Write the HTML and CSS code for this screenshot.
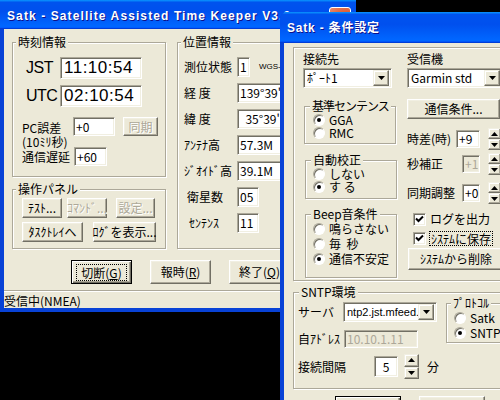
FILE: index.html
```html
<!DOCTYPE html>
<html lang="ja">
<head>
<meta charset="utf-8">
<title>Satk</title>
<link rel="stylesheet" href="styles.css">
</head>
<body>
<div class="win main">
  <div class="titlebar mtb">
    <span class="title">Satk - Satellite Assisted Time Keeper V3.0</span>
    <span class="tclose"><svg width="20" height="20" viewBox="0 0 20 20"><path d="M6 6l8 8M14 6l-8 8" stroke="#fff" stroke-width="2"/></svg></span>
  </div>
  <div class="client mclient">
    <div class="cols">
      <div class="lcol">
        <fieldset class="grp g-time">
          <legend>時刻情報</legend>
          <div class="time-in">
            <div class="trow"><span class="tlbl">JST</span><span class="edit big">11:10:54</span></div>
            <div class="trow r2"><span class="tlbl">UTC</span><span class="edit big">02:10:54</span></div>
            <div class="prow"><span class="plbl">PC誤差</span><span class="edit e-pc">+0</span><span class="btn dis b-sync">同期</span></div>
            <div class="unit">(10ﾐﾘ秒)</div>
            <div class="prow2"><span class="plbl2">通信遅延</span><span class="edit e-delay">+60</span></div>
          </div>
        </fieldset>
        <fieldset class="grp g-panel">
          <legend>操作パネル</legend>
          <div class="panel-in">
            <div class="brow"><span class="btn b-test">ﾃｽﾄ...</span><span class="btn dis b-cmd">ｺﾏﾝﾄﾞ...</span><span class="btn dis b-set">設定...</span></div>
            <div class="brow r2"><span class="btn b-tray">ﾀｽｸﾄﾚｲへ</span><span class="btn b-log">ﾛｸﾞを表示...</span></div>
          </div>
        </fieldset>
      </div>
      <fieldset class="grp g-pos">
        <legend>位置情報</legend>
        <div class="pos-in">
          <div class="prw"><span class="pl">測位状態</span><span class="edit e-fix">1</span><span class="wgs">WGS-84</span></div>
          <div class="prw"><span class="pl">経 度</span><span class="edit e-long">139°39'</span></div>
          <div class="prw"><span class="pl">緯 度</span><span class="edit e-long">&nbsp; 35°39'</span></div>
          <div class="prw"><span class="pl">ｱﾝﾃﾅ高</span><span class="edit e-long">57.3M</span></div>
          <div class="prw"><span class="pl">ｼﾞｵｲﾄﾞ高</span><span class="edit e-long">39.1M</span></div>
          <div class="prw"><span class="pl pl-sat">衛星数</span><span class="edit e-short">05</span></div>
          <div class="prw"><span class="pl pl-sen">ｾﾝﾃﾝｽ</span><span class="edit e-short">11</span></div>
        </div>
      </fieldset>
    </div>
    <div class="mbtns">
      <span class="btn def mb"><span class="focus">切断(<u>G</u>)</span></span>
      <span class="btn mb">報時(<u>R</u>)</span>
      <span class="btn mb">終了(<u>Q</u>)</span>
    </div>
    <div class="status">受信中(NMEA)</div>
  </div>
</div>

<div class="win dlg">
  <div class="titlebar dtb"><span class="title">Satk - 条件設定</span></div>
  <div class="client dclient">
    <div class="etched outer">
      <div class="dl">
        <div class="lbl">接続先</div>
        <div class="combo c-port"><span class="ctext">ﾎﾟｰﾄ1</span><span class="dd"><svg width="7" height="4" viewBox="0 0 7 4"><path d="M0 0h7L3.5 4z"/></svg></span></div>
        <fieldset class="grp dg g-sent">
          <legend>基準センテンス</legend>
          <div class="ropt"><span class="radio on"></span>GGA</div>
          <div class="ropt"><span class="radio"></span>RMC</div>
        </fieldset>
        <fieldset class="grp dg g-auto">
          <legend>自動校正</legend>
          <div class="ropt"><span class="radio"></span>しない</div>
          <div class="ropt"><span class="radio on"></span>す る</div>
        </fieldset>
        <fieldset class="grp dg g-beep">
          <legend>Beep音条件</legend>
          <div class="ropt r15"><span class="radio"></span>鳴らさない</div>
          <div class="ropt r15"><span class="radio"></span>毎&nbsp; 秒</div>
          <div class="ropt r15"><span class="radio on"></span>通信不安定</div>
        </fieldset>
      </div>
      <div class="dr">
        <div class="lbl">受信機</div>
        <div class="combo c-recv"><span class="ctext">Garmin std</span><span class="dd"><svg width="7" height="4" viewBox="0 0 7 4"><path d="M0 0h7L3.5 4z"/></svg></span></div>
        <span class="btn b-comm">通信条件...</span>
        <div class="srow s1"><span class="sl sl1">時差(時)</span><span class="edit e-tz">+9</span>
          <span class="spin"><span class="sb"><svg width="7" height="4" viewBox="0 0 7 4"><path d="M0 4h7L3.5 0z"/></svg></span><span class="sb"><svg width="7" height="4" viewBox="0 0 7 4"><path d="M0 0h7L3.5 4z"/></svg></span></span></div>
        <div class="srow s2"><span class="sl">秒補正</span><span class="edit dis e-sm">+1</span>
          <span class="spin"><span class="sb"><svg width="7" height="4" viewBox="0 0 7 4"><path d="M0 4h7L3.5 0z"/></svg></span><span class="sb"><svg width="7" height="4" viewBox="0 0 7 4"><path d="M0 0h7L3.5 4z"/></svg></span></span></div>
        <div class="srow s3"><span class="sl">同期調整</span><span class="edit e-sm">+0</span>
          <span class="spin"><span class="sb"><svg width="7" height="4" viewBox="0 0 7 4"><path d="M0 4h7L3.5 0z"/></svg></span><span class="sb"><svg width="7" height="4" viewBox="0 0 7 4"><path d="M0 0h7L3.5 4z"/></svg></span></span></div>
        <div class="crow c1"><span class="chk"><svg width="9" height="9" viewBox="0 0 9 9"><path d="M1 3.5l2.5 2.5L8 1.5" fill="none" stroke="#000" stroke-width="2"/></svg></span><span class="ctxt">ログを出力</span></div>
        <div class="crow c2"><span class="chk"><svg width="9" height="9" viewBox="0 0 9 9"><path d="M1 3.5l2.5 2.5L8 1.5" fill="none" stroke="#000" stroke-width="2"/></svg></span><span class="ctxt focus2">ｼｽﾃﾑに保存</span></div>
        <span class="btn b-del">ｼｽﾃﾑから削除</span>
      </div>
    </div>
    <fieldset class="grp dg g-sntp">
      <legend>SNTP環境</legend>
      <div class="sntp-top">
        <div class="sntp-left">
          <div class="nrow n1"><span class="nl">サーバ</span><span class="combo c-srv"><span class="ctext">ntp2.jst.mfeed.ad.jp</span><span class="dd"><svg width="7" height="4" viewBox="0 0 7 4"><path d="M0 0h7L3.5 4z"/></svg></span></span></div>
          <div class="nrow n2"><span class="nl nl2">自ｱﾄﾞﾚｽ</span><span class="edit dis e-addr">10.10.1.11</span></div>
        </div>
        <fieldset class="grp dg g-proto">
          <legend>ﾌﾟﾛﾄｺﾙ</legend>
          <div class="ropt r15"><span class="radio"></span>Satk</div>
          <div class="ropt r15"><span class="radio on"></span>SNTP</div>
        </fieldset>
      </div>
      <div class="nrow n3"><span class="nl nl3">接続間隔</span><span class="edit e-int">5</span>
        <span class="spin spin-big"><span class="sb"><svg width="7" height="4" viewBox="0 0 7 4"><path d="M0 4h7L3.5 0z"/></svg></span><span class="sb"><svg width="7" height="4" viewBox="0 0 7 4"><path d="M0 0h7L3.5 4z"/></svg></span></span>
        <span class="min">分</span></div>
    </fieldset>
    <div class="dbtns"><span class="btn def db">OK</span><span class="btn db">ｷｬﾝｾﾙ</span></div>
  </div>
</div>
</body>
</html>
```

FILE: styles.css
```css
* { box-sizing: border-box; }
html, body { margin: 0; padding: 0; }
body {
  width: 500px; height: 400px; overflow: hidden; position: relative;
  background: #000;
  font-family: "Noto Sans CJK JP", "Noto Sans", sans-serif;
  font-size: 12px; line-height: 14px; color: #000;
}

/* windows */
.win { position: absolute; display: flex; flex-direction: column; background: #0842D6; }
.main { left: 0; top: 0; width: 356px; height: 312px; }
.dlg { left: 280px; top: 12px; width: 236px; height: 420px; border-radius: 7px 7px 0 0; overflow: hidden; }
.titlebar {
  flex: none; display: flex; align-items: center; color: #fff; white-space: nowrap;
  background: linear-gradient(180deg, #0997ff 0, #0053ee 8%, #0050ee 40%, #06f 88%, #06f 93%, #005bff 95%, #003dd7 96%, #003dd7 100%);
  font-family: "Liberation Sans", "Noto Sans CJK JP", sans-serif;
  font-weight: bold; font-size: 12px; letter-spacing: 0.8px;
  text-shadow: 1px 1px #0f1089;
}
.mtb { height: 29px; padding: 2px 0 0 7px; letter-spacing: 1.1px; }
.dtb { height: 31px; padding: 1px 0 0 7px; }
.tclose {
  margin-left: auto; margin-right: 5px; align-self: flex-start; margin-top: 5px;
  width: 22px; height: 22px; border: 1px solid #fff; border-radius: 3px;
  background: radial-gradient(circle at 85% 85%, #c13a11 0, #de5a32 50%, #ea8c6e 100%);
  display: flex;
}
.client { flex: 1; margin: 0 4px 4px; background: #ECE9D8; }

/* common controls */
.grp {
  margin: 0; padding: 0; min-width: 0;
  border: 1px solid #ACA899;
  box-shadow: inset 1px 1px #fff, 1px 1px #fff;
}
.grp legend { padding: 0 2px; margin-left: 3px; line-height: 14px; background: #ECE9D8; white-space: nowrap; }
.etched { border: 1px solid #ACA899; box-shadow: inset 1px 1px #fff, 1px 1px #fff; }

.btn {
  display: flex; align-items: center; justify-content: center; flex: none; white-space: nowrap;
  background: #ECE9D8;
  border: 1px solid; border-color: #fff #716F64 #716F64 #fff;
  box-shadow: inset -1px -1px #ACA899, inset 1px 1px #F1EFE2;
}
.btn.dis { color: #ACA899; text-shadow: 1px 1px #fff; }
.btn.def { border-color: #000; box-shadow: inset 1px 1px #fff, inset -1px -1px #716F64, inset -2px -2px #ACA899; }
.focus { border: 1px dotted #000; padding: 1px 4px 0; line-height: 14px; }

.edit {
  display: flex; align-items: center; flex: none; white-space: nowrap; overflow: hidden;
  background: #fff;
  border: 1px solid; border-color: #ACA899 #fff #fff #ACA899;
  box-shadow: inset 1px 1px #716F64, inset -1px -1px #F1EFE2;
  padding: 0 2px;
}
.edit.dis { background: #ECE9D8; color: #ACA899; }

.radio {
  flex: none; position: relative; width: 12px; height: 12px; border-radius: 50%;
  background: #fff; border: 1px solid; border-color: #ACA899 #fff #fff #ACA899;
  box-shadow: inset 1px 1px #716F64;
}
.radio.on::after {
  content: ""; position: absolute; left: 3px; top: 3px; width: 4px; height: 4px;
  border-radius: 50%; background: #000;
}
.chk {
  flex: none; width: 13px; height: 13px; display: flex; align-items: center; justify-content: center;
  background: #fff; border: 1px solid; border-color: #ACA899 #fff #fff #ACA899;
  box-shadow: inset 1px 1px #716F64, inset -1px -1px #F1EFE2;
}
.combo {
  display: flex; align-items: center; flex: none; height: 20px;
  background: #fff; border: 1px solid; border-color: #ACA899 #fff #fff #ACA899;
  box-shadow: inset 1px 1px #716F64, inset -1px -1px #F1EFE2;
  padding: 2px; overflow: hidden;
}
.ctext { flex: 1; white-space: nowrap; overflow: hidden; padding-left: 1px; }
.dd, .sb {
  flex: none; display: flex; align-items: center; justify-content: center;
  background: #ECE9D8;
  border: 1px solid; border-color: #F1EFE2 #716F64 #716F64 #F1EFE2;
  box-shadow: inset -1px -1px #ACA899, inset 1px 1px #fff;
}
.dd { width: 16px; height: 16px; }
.spin { display: flex; flex-direction: column; width: 13px; height: 22px; margin-left: 8px; flex: none; }
.sb { flex: 1; }

/* main window */
.mclient { display: flex; flex-direction: column; padding: 6px 0 0 8px; }
.cols { display: flex; gap: 11px; height: 214px; }
.lcol { width: 154px; display: flex; flex-direction: column; gap: 5px; }
.g-time { height: 142px; }
.g-panel { height: 67px; }
.g-pos { width: 170px; height: 214px; }

.time-in { padding: 8px 0 0 9px; }
.trow { display: flex; align-items: center; height: 22px; margin-left: 4px; }
.trow.r2 { margin-top: 6px; }
.tlbl { width: 34px; font-family: "Liberation Sans", sans-serif; font-size: 16px; letter-spacing: -0.5px; }
.edit.big { width: 82px; height: 22px; font-family: "Liberation Sans", sans-serif; font-size: 17px; letter-spacing: 0.5px; padding-left: 3px; }
.prow { display: flex; align-items: center; height: 19px; margin-top: 10px; }
.plbl { width: 51px; padding-top: 2px; }
.e-pc { width: 42px; height: 19px; }
.b-sync { width: 35px; height: 19px; margin-left: 8px; }
.unit { height: 11px; line-height: 11px; }
.prow2 { display: flex; align-items: center; height: 19px; }
.plbl2 { width: 52px; }
.e-delay { width: 33px; height: 19px; }

.panel-in { padding: 2px 0 0 9px; }
.brow { display: flex; height: 20px; }
.brow.r2 { margin-top: 4px; }
.b-test { width: 40px; }
.b-cmd { width: 40px; margin-left: 5px; }
.b-set { width: 39px; margin-left: 9px; }
.b-tray { width: 61px; }
.b-log { width: 63px; margin-left: 10px; }

.pos-in { padding: 8px 0 0 6px; display: flex; flex-direction: column; gap: 6px; }
.prw { display: flex; align-items: center; height: 20px; }
.pl { width: 53px; white-space: nowrap; }
.pl-sat { padding-left: 3px; }
.pl-sen { padding-left: 5px; }
.e-fix { width: 13px; height: 20px; padding-left: 2px; }
.wgs { font-size: 8px; margin-left: 9px; font-family: "Liberation Sans", sans-serif; }
.e-long { width: 70px; height: 20px; }
.e-short { width: 22px; height: 20px; }

.mbtns { display: flex; gap: 18px; margin-top: 11px; padding-left: 59px; height: 24px; }
.mb { width: 61px; height: 24px; }
.status {
  margin: 6px 0 0 -8px; height: 18px; padding: 3px 0 0 0;
  border-top: 1px solid #ACA899; box-shadow: inset 0 1px #fff;
}

/* dialog */
.dclient { display: flex; flex-direction: column; padding-left: 9px; }
.outer { margin-top: 4px; width: 216px; height: 234px; flex: none; display: flex; padding: 4px 0 0 9px; gap: 10px; }
.dl { width: 94px; flex: none; display: flex; flex-direction: column; }
.dr { width: 94px; flex: none; display: flex; flex-direction: column; }
.lbl { height: 14px; }
.combo.c-port { width: 89px; margin-top: 2px; }
.combo.c-recv { width: 96px; margin-top: 2px; }
.dg legend { margin-left: 5px; }
.g-sent legend { letter-spacing: -1px; }
.g-sent { margin: 11px 0 0 1px; width: 92px; height: 45px; }
.g-auto { margin: 9px 0 0 2px; width: 92px; height: 46px; }
.g-beep { margin: 8px 0 0 2px; width: 92px; height: 71px; }
.ropt { display: flex; align-items: center; height: 13px; line-height: 13px; padding-left: 8px; gap: 4px; white-space: nowrap; }
.ropt.r15 { height: 15px; }
.g-auto .ropt, .g-beep .ropt { padding-left: 7px; }

.b-comm { width: 93px; height: 20px; margin-top: 11px; }
.srow { display: flex; align-items: center; height: 18px; }
.s1 { margin-top: 11px; }
.s2 { margin-top: 7px; }
.s3 { margin-top: 11px; }
.sl { width: 55px; white-space: nowrap; }
.sl1 { width: 49px; }
.e-tz { width: 24px; height: 18px; }
.e-sm { width: 18px; height: 18px; }
.crow { display: flex; align-items: center; height: 14px; padding-left: 6px; gap: 4px; }
.c1 { margin-top: 10px; }
.c2 { margin-top: 5px; }
.ctxt { white-space: nowrap; }
.focus2 { border: 1px dotted #000; margin-left: -1px; padding: 0 1px; line-height: 13px; }
.b-del { width: 96px; height: 22px; margin-top: 3px; margin-left: 1px; }

.g-sntp { margin-top: 4px; width: 216px; height: 104px; flex: none; }
.sntp-top { display: flex; align-items: flex-start; padding-left: 4px; }
.sntp-left { display: flex; flex-direction: column; }
.nrow { display: flex; align-items: center; white-space: nowrap; }
.n1 { height: 20px; margin-top: 3px; }
.n2 { height: 18px; margin-top: 8px; }
.nl { width: 45px; }
.nl2 { width: 46px; }
.combo.c-srv { width: 94px; }
.c-srv .ctext { font-family: "Liberation Sans", sans-serif; font-size: 11px; }
.e-addr { width: 74px; height: 18px; }
.g-proto { margin: -3px 0 0 9px; width: 72px; height: 47px; }
.g-proto legend { margin-left: 4px; }
.g-proto .ropt { padding-left: 7px; }
.n3 { height: 21px; margin-top: 8px; padding-left: 4px; }
.nl3 { width: 76px; }
.e-int { width: 24px; height: 21px; justify-content: center; }
.spin-big { width: 15px; height: 25px; margin-left: 6px; }
.min { margin-left: 8px; }
.dbtns { display: flex; gap: 18px; margin-top: 7px; padding-left: 42px; }
.db { width: 66px; height: 23px; }
```
